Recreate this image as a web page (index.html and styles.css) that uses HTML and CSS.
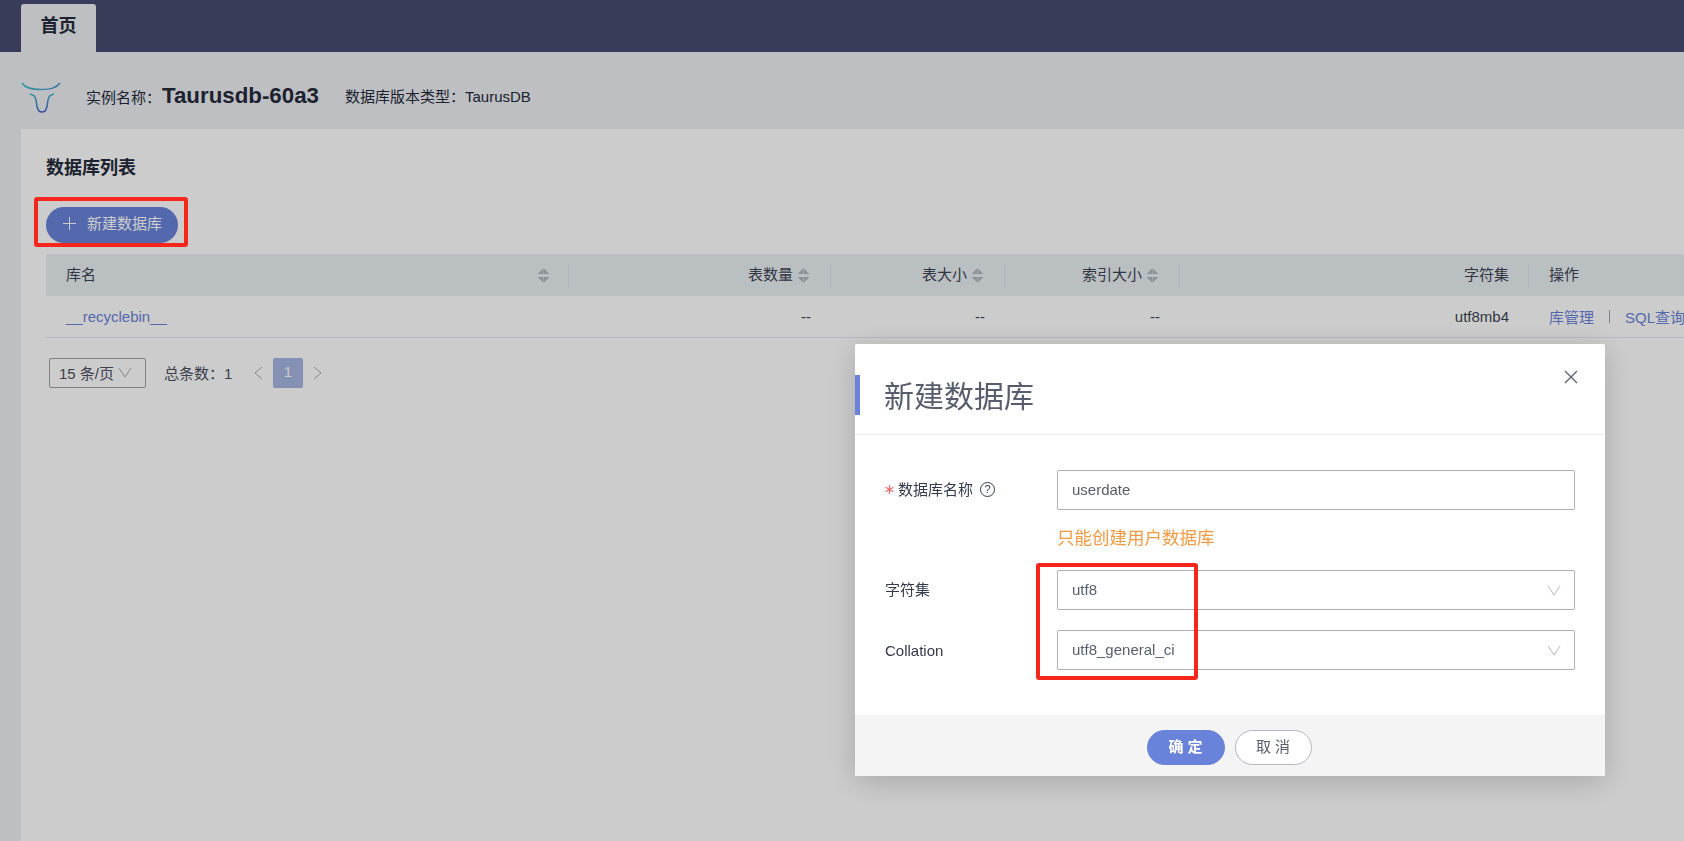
FILE: index.html
```html
<!DOCTYPE html>
<html lang="zh-CN">
<head>
<meta charset="utf-8">
<title>数据库列表</title>
<link rel="stylesheet" href="styles.css">
</head>
<body>
<header class="topbar"><div class="tab">首页</div></header>
<section class="instance">
  <svg class="logo" width="42" height="36" viewBox="0 0 42 36" fill="none">
    <defs>
      <linearGradient id="lg1" x1="0" y1="0" x2="1" y2="0"><stop offset="0" stop-color="#3fc0c8"/><stop offset="1" stop-color="#4a8fd0"/></linearGradient>
      <linearGradient id="lg2" x1="0" y1="0" x2="0" y2="1"><stop offset="0" stop-color="#45b4c8"/><stop offset="1" stop-color="#3f5fc0"/></linearGradient>
    </defs>
    <path d="M1 3C4 8 10 9.5 20 9.5S35 8 39 3" stroke="url(#lg1)" stroke-width="1.5"/>
    <path d="M9 14C13 15 14 16 15 20C16 26 16 32 21 32S26 26 27 20C28 16 29 15 33 14" stroke="url(#lg2)" stroke-width="1.5"/>
  </svg>
  <span class="inst-label">实例名称：</span>
  <strong class="inst-name">Taurusdb-60a3</strong>
  <span class="inst-type">数据库版本类型：TaurusDB</span>
</section>
<main class="card">
  <h2 class="card-title">数据库列表</h2>
  <button class="btn-new"><span class="plus"></span><span class="btn-text">新建数据库</span></button>
  <div class="table">
    <div class="thead">
      <div class="th"><span class="grow">库名</span><i class="sort"></i></div>
      <div class="th end sorted">表数量<i class="sort"></i></div>
      <div class="th end sorted">表大小<i class="sort"></i></div>
      <div class="th end sorted">索引大小<i class="sort"></i></div>
      <div class="th end">字符集</div>
      <div class="th last">操作</div>
    </div>
    <div class="trow">
      <div class="td"><a class="link">__recyclebin__</a></div>
      <div class="td end">--</div>
      <div class="td end">--</div>
      <div class="td end">--</div>
      <div class="td end">utf8mb4</div>
      <div class="td ops"><a class="link">库管理</a><span class="sep"></span><a class="link">SQL查询</a></div>
    </div>
  </div>
  <div class="pager">
    <div class="size">15 条/页<svg width="14" height="11" viewBox="0 0 14 11" fill="none"><path d="M1 1L7 10L13 1" stroke="#a8a8a8"/></svg></div>
    <span class="total">总条数：1</span>
    <svg class="arrow" width="10" height="14" viewBox="0 0 10 14" fill="none"><path d="M9 1L2 7L9 13" stroke="#a8a8a8"/></svg>
    <span class="page">1</span>
    <svg class="arrow" width="10" height="14" viewBox="0 0 10 14" fill="none"><path d="M1 1L8 7L1 13" stroke="#a8a8a8"/></svg>
  </div>
</main>
<div class="overlay"></div>
<div class="modal">
  <div class="modal-head">
    <h3 class="modal-title">新建数据库</h3>
    <svg class="close" width="14" height="14" viewBox="0 0 14 14" fill="none"><path d="M1 1L13 13M13 1L1 13" stroke="#5c6270" stroke-width="1.4"/></svg>
  </div>
  <div class="modal-body">
    <div class="field">
      <label class="label">
        <svg class="req" width="9" height="9" viewBox="0 0 9 9" fill="none"><path d="M4.5 0V9M.6 2.2L8.4 6.8M8.4 2.2L.6 6.8" stroke="#f26a6a" stroke-width="1.2"/></svg>
        <span class="cjk">数据库名称</span><span class="help">?</span>
      </label>
      <div class="input">userdate</div>
    </div>
    <div class="hint">只能创建用户数据库</div>
    <div class="field">
      <label class="label"><span class="cjk">字符集</span></label>
      <div class="input">utf8<svg class="chev" width="14" height="11" viewBox="0 0 14 11" fill="none"><path d="M1 1L7 10L13 1" stroke="#b5b8c0"/></svg></div>
    </div>
    <div class="field gap">
      <label class="label">Collation</label>
      <div class="input">utf8_general_ci<svg class="chev" width="14" height="11" viewBox="0 0 14 11" fill="none"><path d="M1 1L7 10L13 1" stroke="#b5b8c0"/></svg></div>
    </div>
  </div>
  <div class="modal-foot">
    <button class="btn primary"><span class="cjk">确 定</span></button>
    <button class="btn"><span class="cjk">取 消</span></button>
  </div>
</div>
<div class="mark mark-btn"></div>
<div class="mark mark-sel"></div>
</body>
</html>
```
FILE: styles.css
```css
* { box-sizing: border-box; }
html, body { height: 100%; }
body {
  margin: 0;
  overflow: hidden;
  background: #edeff4;
  color: #252b3a;
  font: 15px "Liberation Sans", "Noto Sans CJK SC", sans-serif;
}
.topbar { height: 52px; background: #474c6f; padding: 4px 0 0 21px; }
.tab {
  width: 75px;
  height: 48px;
  background: #edeff4;
  border-radius: 3px 3px 0 0;
  text-align: center;
  font-size: 18px;
  font-weight: 700;
  line-height: 45px;
}
.instance { height: 77px; display: flex; align-items: flex-start; padding: 0 0 0 21px; }
.logo { margin-top: 28px; flex: none; }
.inst-label { margin: 35px 0 0 23px; width: 76px; font-size: 15px; line-height: 22px; }
.inst-name { margin: 30px 0 0 0; font-size: 22.3px; line-height: 28px; }
.inst-type { margin: 35px 0 0 26px; font-size: 15px; line-height: 20px; }
.card { margin-left: 21px; height: 712px; background: #fff; padding: 25px 0 0 25px; width: 1700px; }
.card-title { margin: 0; font-size: 18px; line-height: 28px; font-weight: 700; }
.btn-new {
  margin-top: 25px;
  display: flex;
  align-items: center;
  width: 132px;
  height: 36px;
  padding: 0 0 5px 17px;
  border: 0;
  border-radius: 18px;
  background: #6a83da;
  color: #fff;
  font: 15px "Liberation Sans", "Noto Sans CJK SC", sans-serif;
}
.plus { width: 13px; height: 13px; margin: 1px 11px 0 0; background: linear-gradient(#fff,#fff) center/13px 1px no-repeat, linear-gradient(#fff,#fff) center/1px 13px no-repeat; }
.table { margin-top: 11px; width: 1660px; }
.thead, .trow { display: grid; grid-template-columns: 523px 262px 174px 175px 349px 1fr; }
.thead { height: 42px; background: #e9eff3; align-items: center; }
.trow { height: 42px; border-bottom: 1px solid #e4e8ef; align-items: center; }
.th { display: flex; align-items: center; height: 24px; padding: 0 19px 3px 20px; border-right: 1px solid #dde2ea; color: #3e4454; }
.th.end { justify-content: flex-end; }
.th.sorted { padding-right: 21px; }
.th.last { border-right: 0; }
.grow { flex: 1; }
.sort {
  display: block;
  width: 11px;
  height: 15px;
  margin: 3px 0 0 5px;
  background:
    linear-gradient(to bottom right, transparent 50%, #b3b7bd 50%) left top/50% 6px no-repeat,
    linear-gradient(to bottom left, transparent 50%, #b3b7bd 50%) right top/50% 6px no-repeat,
    linear-gradient(to top right, transparent 50%, #b3b7bd 50%) left bottom/50% 6px no-repeat,
    linear-gradient(to top left, transparent 50%, #b3b7bd 50%) right bottom/50% 6px no-repeat;
}
.td { padding: 0 20px 0 20px; color: #3e4454; white-space: nowrap; }
.td.end { text-align: right; }
.link { color: #6a83da; }
.ops { display: flex; align-items: center; }
.sep { width: 1px; height: 13px; background: #9aa0ab; margin: 0 15px; }
.pager { display: flex; align-items: center; margin: 20px 0 0 3px; height: 30px; color: #4a5060; }
.size { width: 97px; height: 30px; border: 1px solid #a0a0a0; border-radius: 2px; display: flex; align-items: center; gap: 4px; padding: 0 0 2px 9px; }
.total { margin: 0 19px 2px 18px; width: 70px; white-space: nowrap; }
.page { width: 30px; height: 30px; margin: 0 10px; border-radius: 2px; background: #a5b5e2; color: #fff; text-align: center; line-height: 28px; }
.overlay { position: fixed; inset: 0; background: rgba(0,0,0,.2); }
.modal {
  position: fixed;
  left: 855px;
  top: 344px;
  width: 750px;
  height: 432px;
  display: flex;
  flex-direction: column;
  background: #fff;
  border-radius: 2px;
  box-shadow: 0 6px 30px rgba(0,0,0,.18);
}
.modal-head { position: relative; height: 91px; border-bottom: 1px solid #ebedf0; padding: 33px 0 0 29px; }
.modal-head::before { content: ""; position: absolute; left: 0; top: 31px; width: 5px; height: 40px; background: #6a83da; }
.modal-title { margin: 0; font-size: 30px; line-height: 40px; font-weight: 400; color: #575d6c; }
.close { position: absolute; right: 27px; top: 26px; }
.modal-body { flex: 1; padding: 35px 31px 0 30px; font-size: 15px; }
.field { display: grid; grid-template-columns: 172px 518px; align-items: center; }
.field.gap { margin-top: 20px; }
.label { color: #333a4b; display: flex; align-items: center; }
.cjk { display: inline-block; transform: translateY(-2px); }
.req { margin-right: 4px; transform: translateY(-1px); }
.help { width: 15px; height: 15px; margin: 0 0 2px 7px; border: 1.3px solid #333a4b; border-radius: 50%; font-size: 11px; text-align: center; line-height: 13px; }
.input {
  position: relative;
  height: 40px;
  border: 1px solid #adb0b8;
  border-radius: 2px;
  padding-left: 14px;
  line-height: 38px;
  color: #575d6c;
}
.chev { position: absolute; right: 13px; top: 14px; }
.hint { height: 60px; margin-left: 172px; padding-top: 16px; line-height: 24px; font-size: 17.5px; color: #f59a42; }
.modal-foot { height: 61px; background: #f4f4f5; border-top: 1px solid #eef0f2; display: flex; justify-content: center; gap: 10px; padding: 14px 2px 0 0; }
.btn {
  width: 77px;
  height: 35px;
  border: 1px solid #b5b8c0;
  border-radius: 18px;
  background: #fff;
  color: #575d6c;
  font: 15px "Liberation Sans", "Noto Sans CJK SC", sans-serif;
}
.btn.primary { width: 78px; background: #6a83da; border-color: #6a83da; color: #fff; font-weight: 700; }
.mark { position: fixed; border: 4px solid #f5261c; border-radius: 3px; }
.mark-btn { left: 34px; top: 197px; width: 154px; height: 50px; }
.mark-sel { left: 1036px; top: 563px; width: 162px; height: 117px; }
```
